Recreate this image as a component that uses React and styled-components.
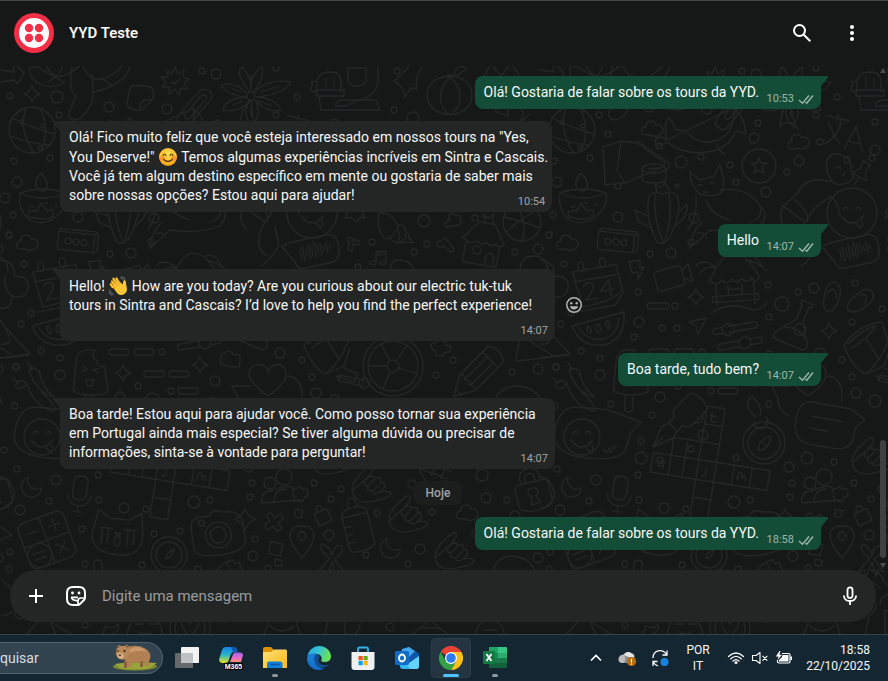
import React from 'react';
import styled, { createGlobalStyle } from 'styled-components';

const GlobalStyle = createGlobalStyle`
  *, *::before, *::after { box-sizing: border-box; }
  body { margin: 0; background: #161717; font-family: Roboto, "Noto Sans", sans-serif; color: #f7f8f8; }
  button { font: inherit; color: inherit; background: none; border: 0; padding: 0; cursor: pointer; }
  svg { display: block; flex: none; }
`;

const Screen = styled.div`
  display: flex;
  flex-direction: column;
  min-height: 100vh;
`;

/* ---------- header ---------- */

const Header = styled.header`
  display: flex;
  align-items: center;
  height: 66px;
  padding: 0 24px 2px 14px;
  background: #161717;
  border-top: 1px solid #444646;
`;

const Title = styled.h1`
  flex: 1;
  margin: 0 0 0 15px;
  font-size: 15px;
  line-height: 20px;
  font-weight: 600;
`;

const HeaderActions = styled.div`
  display: flex;
  gap: 26px;
`;

const IconButton = styled.button`
  display: grid;
  place-items: center;
  width: 24px;
  height: 24px;
`;

/* ---------- conversation ---------- */

const Chat = styled.main`
  position: relative;
  isolation: isolate;
  flex: 1;
  display: flex;
  flex-direction: column;
  background: #161717;
`;

const Wallpaper = styled.svg`
  position: absolute;
  inset: 0;
  z-index: -1;
  width: 100%;
  height: 100%;
`;

const Conversation = styled.section`
  flex: 1;
  display: flex;
`;

const Messages = styled.div`
  flex: 1;
  display: flex;
  flex-direction: column;
  gap: 12px;
  padding: 10px 0 20px;
`;

const Row = styled.div`
  display: flex;
  align-items: center;
  gap: 11px;
  justify-content: ${(p) => (p.$out ? 'flex-end' : 'flex-start')};
  padding: ${(p) => (p.$out ? '0 55px 0 0' : '0 0 0 60px')};
`;

const Bubble = styled.article`
  position: relative;
  max-width: 495px;
  padding: 7px 4px 7px 9px;
  border-radius: 8px;
  border-top-left-radius: ${(p) => (p.$out ? '8px' : '0')};
  border-top-right-radius: ${(p) => (p.$out ? '0' : '8px')};
  background: ${(p) => (p.$out ? '#144d37' : '#242626')};
  font-size: 14px;
  line-height: 19px;

  &::before {
    content: '';
    position: absolute;
    top: 0;
    ${(p) => (p.$out ? 'left: 100%' : 'right: 100%')};
    width: 7px;
    height: 10px;
    background: inherit;
    clip-path: ${(p) => (p.$out ? 'polygon(0 0, 100% 0, 100% 15%, 0 100%)' : 'polygon(0 0, 100% 0, 100% 100%, 0 15%)')};
  }
`;

const MetaSpace = styled.span`
  display: inline-block;
  width: ${(p) => (p.$out ? '58px' : '38px')};
  height: 1px;
`;

const Meta = styled.span`
  position: absolute;
  right: 7px;
  bottom: 3px;
  display: flex;
  align-items: center;
  gap: 4px;
  font-size: 11px;
  line-height: 14px;
  color: ${(p) => (p.$out ? '#9fb6ad' : '#a2a4a4')};
`;

const EmojiBox = styled.span`
  display: inline-block;
  vertical-align: -5px;
  height: 20px;
`;

const DayLabel = styled.div`
  align-self: center;
  padding: 5px 12px;
  border-radius: 7px;
  background: #1c1d1d;
  color: #a2a4a4;
  font-size: 12px;
  line-height: 14px;
  font-weight: 500;
`;

const Scrollbar = styled.div`
  display: flex;
  flex-direction: column;
  align-items: center;
  justify-content: space-between;
  width: 12px;
  padding: 2px 0 2px 2px;
`;

const Thumb = styled.div`
  width: 6px;
  height: 118px;
  margin: auto 0 5px;
  border-radius: 3px;
  background: #3f4141;
`;

const Composer = styled.form`
  display: flex;
  align-items: center;
  height: 52px;
  margin: 0 12px 12px 10px;
  padding: 0 14px;
  border-radius: 26px;
  background: #242626;
`;

const ComposerTools = styled.div`
  display: flex;
  gap: 16px;
`;

const MessageInput = styled.input`
  flex: 1;
  min-width: 0;
  margin: 0 12px 0 14px;
  padding: 0;
  border: 0;
  outline: 0;
  background: none;
  color: #f7f8f8;
  font: 15px/20px Roboto, "Noto Sans", sans-serif;
  &::placeholder { color: #9a9c9c; opacity: 1; }
`;

/* ---------- taskbar ---------- */

const Taskbar = styled.footer`
  display: flex;
  align-items: center;
  height: 47px;
  padding-right: 18px;
  background: #152633;
  border-top: 1px solid #36444e;
`;

const SearchBox = styled.button`
  display: flex;
  align-items: center;
  justify-content: space-between;
  width: 163px;
  height: 32px;
  padding-right: 4px;
  border: 1px solid #53616b;
  border-left: 0;
  border-radius: 0 16px 16px 0;
  background: #334451;
  color: #d8dde0;
  font-size: 14px;
`;

const Apps = styled.nav`
  display: flex;
  gap: 4px;
  margin-left: 4px;
`;

const AppButton = styled.button`
  position: relative;
  display: grid;
  place-items: center;
  width: 40px;
  height: 40px;
  border-radius: 4px;
  border: 1px solid ${(p) => (p.$active ? '#2c3c48' : 'transparent')};
  background: ${(p) => (p.$active ? '#243441' : 'transparent')};

  &::after {
    content: '';
    position: absolute;
    bottom: 0;
    display: ${(p) => (p.$open || p.$active ? 'block' : 'none')};
    width: ${(p) => (p.$active ? '16px' : '6px')};
    height: 3px;
    border-radius: 2px;
    background: ${(p) => (p.$active ? '#4cc2ff' : '#8f989e')};
  }
`;

const Tray = styled.div`
  display: flex;
  align-items: center;
  gap: 8px;
  margin-left: auto;
`;

const TrayLabel = styled.button`
  min-width: ${(p) => p.$width};
  text-align: ${(p) => p.$align};
  font-size: 12px;
  line-height: 16px;
  white-space: pre-line;
`;

const TrayGroup = styled.div`
  display: flex;
`;

/* ---------- wallpaper doodles ---------- */

const STAR4 = 'M0-8Q1.500-2 8 0Q2 1.500 0 8Q-1.500 2-8 0Q-2-1.500 0-8Z';
const CLOUD = 'M-7 6C-13 6-13-2-7-2C-8-9 2-10 3-4C10-6 13 5 6 6C4 8 0 8-2 6Z';
const SMILE = 'M-9-3Q-7-8-4-4M4-4Q7-8 9-3M-11 3Q0 17 11 3M3 9L8 15Q12 14 10 8';
const MOON = 'M-3-10C-15-4-9 12 2 10C8 9 11 5 10 1C2 5-5-2-3-10Z';
const HAND = 'M-18 6C-18-6-8-12-2-18C3-21 5-18 2-13L-3-7M-3-7Q2-11 5-7Q11-9 11-3Q16-2 14 3L10 7Q20 5 21 9Q19 13 8 15Q-14 22-18 6ZM-3-7Q-8-2-4 1Q1 0 5-7M-2 2Q-3 6 2 6Q7 4 11-3M3 7Q4 11 10 7';
const BALL = 'M-23 0a23 23 0 1 0 46 0a23 23 0 1 0-46 0M-20-12Q0-2 22 4M-22 6Q0 14 18 15M-6-22Q-14 0 2 23M8-21Q18-4 10 20M-12-8a2 2 0 1 0 4 0a2 2 0 1 0-4 0M9-4a2 2 0 1 0 4 0a2 2 0 1 0-4 0';

// [x, y, rotation, path]
const DOODLES = [
  [32, 94, 0, STAR4], [123, 373, 0, STAR4], [200, 365, 0, STAR4], [156, 297, 0, STAR4], [289, 331, 0, STAR4], [245, 519, 0, 'M0-10Q2-3 11 0Q3 3 0 11Q-3 3-10 0Q-3-3 0-10Z'],
  [113, 129, 0, CLOUD], [259, 142, -10, CLOUD], [28, 243, 0, CLOUD], [468, 513, 0, CLOUD], [452, 220, -12, 'M-7 6C-10 2-6-1-2 0C-4-7 2-9 4-4C10-4 10 5 6 6Z'],
  [31, 487, 0, MOON], [390, 548, 0, MOON],
  [370, 485, 0, HAND], [407, 515, 0, HAND], [453, 552, 0, HAND], [330, 457, 0, HAND],
  [32, 130, 0, BALL],
  [175, 81, 0, 'M0-14L3-7L9-11L8-4L14-2L9 2L13 8L6 7L4 14L0 8L-6 13L-6 6L-13 6L-9 1L-14-4L-7-4L-8-10L-3-7ZM-4 1L-1 3L5-2'],
  [251, 96, 0, 'M-4 0a4 4 0 1 0 8 0a4 4 0 1 0-8 0M-2-5C-16-24-12-26-9-29C-2-22 0-16 0-5C-1-20 5-25 11-29C13-20 8-12 3-4C14-15 28-16 40-14C36-5 20 0 5 1C18 1 28 8 30 14C18 17 10 10 4 4C9 14 9 22 1 29C-7 22-6 12-2 5C-8 13-16 16-28 14C-25 4-16 1-4 1C-18 0-26-4-30-11C-20-14-12-12-4-2M0-10V-20M10-4L28-10M-10-4L-20-8M8 5L20 10M0 10V20M-8 5L-18 9'],
  [140, 98, 0, 'M-6-12Q-9-14-11-6L-13 6Q-12 12-4 12Q0 14 6 8L12 2Q15-4 12-10Q9-13-6-12ZM0 10Q0 2 6 2H12'],
  [195, 106, 40, 'M-6-16Q2-26 8-16V20Q8 30-4 26Q-8 20-6-16ZM-2-12Q2-18 4-12V12Q2 18-2 14Z'],
  [86, 92, 0, 'M-14-26Q-18 0-10 4L-16 18Q-20 26-12 28Q-2 28 6 10Q8 0 6-18M-14-20Q10-44 50-26M8 0Q40-8 44-26M16-14L26-6'],
  [42, 76, 0, 'M-12-8Q-6-12 0-6L22 6Q12 14-2 8Q-14 2-12-8ZM6 6Q20-2 20-10'],
  [8, 74, 0, 'M-8-4L6-2Q4-10 8-9L16-1L10 10L6 6L-8 8'],
  [330, 92, 0, 'M-13 0V-10Q-12-20 0-20Q11-20 11-10V0M-14-10Q-21-12-17-7Q-22-2-15 0M-14-2H14V4H-14ZM-11 4L-9 18H50L46 8H34L12 8Q4 10 6 14H16L30 8Q50 2 48-16V-26M18-24V-12Q20-5 28-6Q38-6 36-18V-24ZM-4-14V-6M4-14V-6'],
  [410, 80, 10, 'M-3-14Q-12 0-16 4Q-4 8-2 18Q2 4 8 8Q4-6 10-16'],
  [450, 95, 0, 'M-23 0C-24-24 22-26 22 0C22 26-22 26-23 0ZM0-18C-14-6-10 14-2 18M0-18C14-8 12 12 2 18M-5-18Q0-22 4-18M4-20Q6-30 14-28Q18-26 12-23Q8-20 4-18'],
  [505, 78, 0, 'M-22 0L-14-14L-4-2L6-14L14-4M-18 6L10 2Q18 6 10 10'],
  [500, 100, 0, 'M-16 8L-8-8L-4 12L8 16V-2L24 12L20 22L30 14'],
  [92, 72, 0, 'M-46-6Q-40 6-30 4Q-18 0-10-8Q-2 12 14 6Q26 0 30-6'],
  [133, 128, 0, 'M-6 12Q-10-6-4-10Q2-4 2 2Q12 0 20 10Q38 20 54 6Q64-8 60-20M60-20Q74-8 72 6Q66 2 62 4Q58 16 44 22Q14 30-6 14Q-18 22-18 12Q-12 6-6 12ZM44 16Q46 24 52 26'],
  [246, 112, 0, 'M-6 16Q-6-4 6-12Q4 4 12 18M-6 14Q4 6 8 16'],
  [300, 133, 14, 'M-16-14H6M-6-18V-12M-12 14Q0 2-2-12M-14-8Q-6 4 2 10M8 14L14-10L26 12M11 6H21'],
  [93, 163, 0, 'M-30-16L-12-22L4-20L32 0L30 4L-8 20L-28 22ZM-12-22L-16 8L-8 20M4-22L36 0Q38 6 30 8'],
  [114, 174, 0, 'M-12-4Q-12-10 0-10Q12-10 12-4V4Q12 9 0 9Q-12 9-12 4ZM-12-4Q0 3 12-4M-6-5L6-6'],
  [219, 166, 0, 'M-17 0a17 17 0 1 0 34 0a17 17 0 1 0-34 0M0-8L2-3H8L3 1L5 7L0 4L-5 7L-3 1L-8-3H-2Z'],
  [170, 190, 0, 'M-20-18L-10-10Q-2-12 4-14L10-26L14-8L12 2Q6 8-10 4Q-20-4-20-18ZM-12-4Q-10-7-8-4M0-6Q2-9 4-6M-6 2L-2 2M10 0Q38-4 50 16Q54 28 40 32M-14 6Q-12 26-22 40M-4 10Q0 24 20 30M50 16Q60 24 50 36Q30 44 0 40L-20 58Q-20 44-8 32M-14 44Q-6 40-4 48'],
  [275, 196, 0, 'M12-36Q18-46 28-40Q38-36 36-26Q42-18 34-14Q22-8 16-16Q10-24 12-36ZM20-28Q24-30 26-27M30-24L28-20M16-14Q-8-22-18-2L-32 10Q-38 24-28 34M-32 10L-10 26L0 12L16 0Q24 8 24 18M-10 26Q-24 50-8 60M-20 4Q-4 18-8 26M0 30L4 50Q-8 68-14 70'],
  [312, 213, 0, 'M-25 0a25 25 0 1 0 50 0a25 25 0 1 0-50 0'], [312, 213, 0, SMILE],
  [320, 175, 30, 'M-4-14H4L3-6L8 2H-8L-3-6ZM0 2V12'],
  [43, 207, 0, 'M-23-14Q0-22 23-14Q26 0 10 12Q0 18-12 14Q-26 4-23-14ZM-23-14Q0-4 23-14M-6-18Q-10-26-2-34Q6-26 4-18Q0-14-6-18ZM-14 10Q-18 2-6 4L-2-4L4 4Q12 0 10 10Q2 14-14 10M-12 0H-9M2-4H4M12-2H14'],
  [123, 212, 0, 'M-14-16Q-10-22 0-18Q10-22 14-16Q20 0 6 26Q0 34-6 30Q-18 6-14-16ZM-8-18Q-10 6 0 30M6-18Q10 4 2 28M-6-20L-8-28L-2-24L2-30L6-22M-16 4L-28-2L-24 10L-12 16M16 0L24-8Q26 4 12 14'],
  [77, 241, 6, 'M-19-8L-17-11H18L21-7V8L18 10H-18Q-20 6-19-8ZM-19-8H17V10M17-8L21-8M-12 1a3 3 0 1 0 6 0a3 3 0 1 0-6 0M-4 1a3 3 0 1 0 6 0a3 3 0 1 0-6 0M4 1a3 3 0 1 0 6 0a3 3 0 1 0-6 0'],
  [57, 284, -10, 'M-22-16H22L24 10Q14 20-18 20ZM-22-6H22M-24 24L14 24L25 12M-16-20a3 5 0 1 0 6 0a3 5 0 1 0-6 0M6-20a3 5 0 1 0 6 0a3 5 0 1 0-6 0M-14 0Q-8-6-4 0Q-4 6-14 14H-2M12 14V-2L2 8H16'],
  [97, 269, 0, 'M-8-7L3-9V-1L7-2L1 11V3L-5 4Z'],
  [131, 277, -16, 'M-13-9H9Q12-9 12-6V8Q12 11 9 11H-13Q-16 11-16 8V-6Q-16-9-13-9ZM12-3L20-8V10L12 5'],
  [196, 287, -4, 'M-26-8Q-10-36 0-34Q14-32 24-8Q20-2 16-8Q12-2 6-8Q2-2-4-8Q-8-2-14-8Q-18-2-26-8ZM-20-4V18M18-4V18M-24 8H22V14H-24ZM-8-2V8M6-2V8M-8 2H6M-38-24Q-30-32-18-20M-36-16Q-28-24-18-20M28-18Q20-34 12-30M32-14Q22-24 12-26M-26 24Q-8 14 10 22Q20 28 30 18'],
  [292, 298, 14, 'M-8-4Q-8-16 0-16Q8-14 7 0Q6 14-2 14Q-8 12-8-4ZM-6-4Q0-14 4-2'], [320, 302, 52, 'M-8-4Q-8-16 0-16Q8-14 7 0Q6 14-2 14Q-8 12-8-4ZM-6-4Q0-14 4-2'],
  [58, 328, 0, 'M-26-2L26-16Q28 8 10 16Q-16 22-26-2ZM-20-1Q-10 14 6 11Q20 6 21-10M-10-2Q-4 4-8 6Q-13 2-10-2M0-4Q5 2 0 5Q-4 0 0-4M10-7Q14-2 10 1Q6-4 10-7'],
  [157, 326, 0, 'M-8-4L9-8L1 8L-1 0Z'],
  [197, 333, -10, 'M-22-8H-14M-8-8H20Q23-4 20-2H-8M-14-2H-22Q-25-5-22-8M-14-5a6 6 0 1 0 12 0a6 6 0 1 0-12 0M-20 8H0M12 8H22Q25 12 22 14H12M0 14H-20Q-23 11-20 8M0 11a6 6 0 1 0 12 0a6 6 0 1 0-12 0'],
  [257, 326, 22, 'M-5-26H7V-22H4V-6L17 14Q18 20 12 20H-14Q-20 20-18 14L-3-6V-22H-5ZM-12 6Q0 0 12 8M-2 2a6 6 0 1 0 12 0a6 6 0 1 0-12 0'],
  [313, 250, -12, 'M-20-12H16Q26-12 26 0Q26 16 14 16H-12Q-20 16-20 8L-30-10ZM-13-3V7M-10-5V9M-7-2V5M-4-6V8M-1-3V6M2-8V8M5-5V5M8-6V6M11-2V3M14-5V6M17-1V2'],
  [355, 212, 0, 'M-10 0Q-6-2-6-6Q0-2 4-8Q6-4 10-4Q6 2 10 6Q4 4 2 10Q-4 4-10 6Q-6 2-10 0'],
  [394, 230, 10, 'M-18-14Q-6-18 4-4Q-2 12-8 10Q-18 2-18-14ZM4-6Q10-8 12 0Q16 0 16 5L22 9L4 12Q-2 10-4 8M4 0Q8 4 6 10M12 2Q14 6 10 10'],
  [353, 243, 20, 'M-6-4H4Q8-2 4 1H0L2 8H-3L-4 0Q-8 0-6-4ZM-3-2H2'], [447, 245, -30, 'M-8-7H2L4 8H-1L-3-1Q-10 0-8-7Z'],
  [379, 258, 0, 'M-3 4V-6L7-7V4M-3-3L7-4M-3 4a3 2 0 1 0-6 2Q-3 8-3 4M7 4a3 2 0 1 0-6 2Q7 7 7 4'],
  [484, 243, 10, 'M-22-2L-8-20H8L20-2Q16 4 12-1Q8 4 3-1Q-2 4-7-1Q-12 5-22-2ZM-18 2V22H16V2M4 22V12Q8 6 12 12V22M-10 8a4 4 0 1 0 8 0a4 4 0 1 0-8 0M-2-20L-6-28L0-25L4-30L6-20'],
  [522, 222, 0, 'M-19 0a19 19 0 1 0 38 0a19 19 0 1 0-38 0M-18-5Q2 0 18 6M-6-18Q6 2 0 19M14-12Q0-4-16 10'],
  [400, 266, 0, 'M-9 4Q-10-6 0-6Q10-6 14 4'], [534, 264, 0, 'M-14 8Q-14-8 0-8Q14-8 14 8'],
  [8, 280, 0, 'M-8-20Q8-18 6-4Q22-4 20 8Q18 20 4 16Q4 30-8 28M-2-4Q-6 6 4 16'],
  [12, 340, 0, 'M-12-20L-8-14L18 14L-12 18M-6-10Q4 6-12 4'],
  [330, 352, 0, 'M-26-6Q-12-28 12-30L18-10Q10 10-4 22Q-16 18-26-6ZM-22-8Q-6-24 6-26M-18-4L-4-14L6-26M-4-14L8 6M-4 22L14 14L20-4M6 24L24 30L28 22L14 16'],
  [393, 366, 0, 'M-30 0a30 30 0 1 0 60 0a30 30 0 1 0-60 0M-25 0a25 25 0 1 0 50 0a25 25 0 1 0-50 0M-6 0a6 6 0 1 0 12 0a6 6 0 1 0-12 0M-6 0H-25M3-5L14-21M6 2L24 8M-3 6L-10 23M-3-5L-12-22'],
  [363, 383, 12, 'M-24-3H0V3H-24ZM-24-3Q-28 0-24 3M-4 0a5 5 0 1 0 10 0a5 5 0 1 0-10 0'],
  [440, 348, 0, 'M-9-4Q-2-6-1-8Q6-8 6-3Q14-2 9 4Q4 4 2 8Q-6 8-4 3Q-10 2-9-4Z'],
  [476, 374, 45, 'M-11-28Q0-36 11-28V12L0 32L-11 12ZM-11-20H11M-4-20V12M4-20V12M-11 12Q-7 8-4 12Q0 8 4 12Q8 8 11 12M-4 25H4'],
  [530, 355, 0, 'M-10-20L-14 6L38 0M-10-20L22 0'], [518, 400, 0, 'M-24 4Q-20-14 0-14Q20-12 24 4'],
  [90, 372, 2, 'M-16 18L-14-14Q-10-24 4-22Q0-14 6-12Q6-6 14-6L19 18Q18 22 0 23Q-16 22-16 18ZM-4 24V38Q0 42 4 38V24M-8-6L-3-3L-8 0M8-4L3-2L8 1M-5 8H5M-3 8V13Q0 15 3 13V8'],
  [119, 352, 0, 'M-7-3H7a3 3 0 0 1 0 6H-7a3 3 0 0 1 0-6ZM18-3H32a3 3 0 0 1 0 6H18a3 3 0 0 1 0-6ZM40 0a3 3 0 1 0 6 0a3 3 0 1 0-6 0'],
  [154, 374, 0, 'M-7-3H7a3 3 0 0 1 0 6H-7a3 3 0 0 1 0-6ZM18-3H32a3 3 0 0 1 0 6H18a3 3 0 0 1 0-6Z'],
  [188, 391, 0, 'M-7-3H7a3 3 0 0 1 0 6H-7a3 3 0 0 1 0-6ZM-20 0a3 3 0 1 0 6 0a3 3 0 1 0-6 0'],
  [118, 306, 0, 'M-8-3H8a3 3 0 0 1 0 6H-8a3 3 0 0 1 0-6ZM14 0a3 3 0 1 0 6 0a3 3 0 1 0-6 0'],
  [230, 359, 8, 'M-9-4Q-4-4-4-8Q2-8 2-5H8Q11-4 10 6Q4 9-9 6Z'],
  [268, 380, 0, 'M0 16Q-20 2-19-7Q-16-18-5-15Q0-12 0-8Q4-16 10-16Q18-14 18-6Q18 4 0 16M20-4Q36-2 34 22M-18 6L-36 6L-30 18Q-30 32-18 36'],
  [33, 382, 0, 'M-4-12Q0-16 6-11Q10 6 18 12Q24 16 18 14Q2 8-4-12ZM-2-12Q-2-18-6-20M-18 4Q-12-6-6 2Q0 20 12 26Q22 32 22 26Q18 18 8 10M-18 4Q-14 10-6 2M-16 0L-20-4'],
  [60, 439, 4, 'M-26-30H4L40-20L30-8L26 10Q20 20-8 20Q-44 20-46 0Q-44-30-26-30ZM4 10L7 13L13 6M9 11L11 13L17 6'], [42, 437, 0, 'M-18 0a18 18 0 1 0 36 0a18 18 0 1 0-36 0'], [42, 437, 0, SMILE],
  [140, 420, 45, 'M-12-24Q-12-30 0-30Q12-30 12-24V-6Q12 0 6 2V10H-6V2Q-12 0-12-6ZM-6 10L-8 18L0 38L8 18L6 10M0 36V24M12-20Q20-14 12-8'],
  [175, 460, 9, 'M-16-52H2V22H-16M-16-52V60M2-52V60H-16M-16-34H2M-16-16H2M-62 2H56M-62 22H56M-62 2V22M-44 2V-16H-16M-44-16V22M-30-16V22M20 2V22M38 2V22M56 2V22M-16 40H2M-10-46V-38Q-8-36-6-38M-12-43H-6M-56 12Q-52 6-50 12Q-54 18-56 12M-50 8V16M25 16V9Q29 6 29 14Q33 6 33 16M-7 9V16Q-9 19-11 17'],
  [224, 443, 0, 'M-21 0a21 21 0 1 0 42 0a21 21 0 1 0-42 0M-16 0a16 16 0 1 0 32 0a16 16 0 1 0-32 0M6-7Q8 4-5 8Q-8-2 6-7ZM-1-1L3 3M-10-22a7 7 0 1 0 12-4M-8-26Q-18-32-16-42Q-12-50-6-40Q-2-34-4-28'],
  [287, 427, 10, 'M-20-22H20L36-14L28-4V6Q26 20 10 20H-16Q-32 18-32-2Q-32-20-20-22ZM-16-8H14M-16 4H2'],
  [80, 490, 8, 'M-7-8Q-7-14 0-14Q7-14 7-8V4Q7 10 0 10Q-7 10-7 4ZM-12 6Q-10 16 0 16Q10 16 12 4M0 16V22M-4 22H4'],
  [280, 487, 0, 'M-16-4a6 6 0 1 0 12 0a6 6 0 1 0-12 0M-4-10a8 8 0 1 0 16 0a8 8 0 1 0-16 0M-18 16Q-20 4-8 4Q8-4 14 2M-6 16Q-6 2 6 2M-18 16L20 13M16 2Q20-2 22 2Q28 0 28 6Q28 10 24 10Q24 16 18 14Q12 12 14 8Q10 2 16 2'],
  [47, 540, -20, 'M-24-16Q-24-24-16-24H16Q24-24 24-16V16Q24 24 16 24H-16Q-24 24-24 16ZM0-24V24M-24 0H24M-16-12H-6M6-12H18M12-18V-6M7 7L17 17M17 7L7 17M-24 12a12 12 0 1 0 24 0a12 12 0 1 0-24 0M-18 9H-6M-18 15H-6'],
  [118, 533, 6, 'M-24-6L-22-22L-10-14H10L22-22L24-6Q30 22 0 22Q-32 20-24-6ZM-18-4H-6M6-4H18M-16-4V12M-10-4V10M10-4V12M16-4V10M-3 8a3 5 0 1 0 6 0a3 5 0 1 0-6 0M-3 0H3L0 3Z'],
  [218, 533, -8, 'M-26-8Q-26-18-16-18H-6Q-2-26 8-20Q24-20 26-8V12Q24 22 0 22Q-26 22-26 12ZM-13 2a13 13 0 1 0 26 0a13 13 0 1 0-26 0M-8 2a8 8 0 1 0 16 0a8 8 0 1 0-16 0M-18-12a3 3 0 1 0 6 0a3 3 0 1 0-6 0'],
  [169, 555, 0, 'M-18 0a18 18 0 1 0 36 0a18 18 0 1 0-36 0M-13 0a13 13 0 1 0 26 0a13 13 0 1 0-26 0M5-6Q3 4-3 3Q-3-2 5-6'],
  [274, 522, 10, 'M-9-6L-5-9L0-4L5-9L9-5L4 0L9 5L5 9L0 4L-5 9L-9 5L-4 0Z'],
  [302, 540, 0, 'M0 18Q-12 4-12-4Q-12-14 0-14Q12-14 12-4Q12 4 0 18M-4-4a4 4 0 1 0 8 0a4 4 0 1 0-8 0'],
  [276, 552, 12, 'M-7-9H5V3H-7ZM1 7H8V13H1Z'], [298, 513, 10, 'M-3-3H4V4H-3Z'], [322, 515, -25, 'M-7-4H7V9H-7ZM-3-4Q-4-10 0-10Q4-10 3-4'],
  [357, 525, -14, 'M-13-10Q-13-18 0-18Q13-18 13-10V22Q10 27-8 26Q-13 26-13 20ZM-13-10H13M-5-18Q-4-28 0-28Q4-28 5-18M-13 0H-6M-13 8H-7M-13 16H-6'],
  [332, 560, 0, 'M-2-2Q-14-10-10-16Q-2-14 0-4Q2-16 10-14Q12-6 2-1L12 12L6 10L4 16L0 2L-6 16L-8 10L-14 12Z'],
  [533, 492, -14, 'M-14-10Q-17-9-17-4V12Q-16 18 0 19Q16 18 17 12V-4Q17-9 14-10ZM-10-10V-16Q-8-24 0-24Q8-24 10-16V-10M-5-10V-15Q-4-19 0-19Q4-19 5-15V-10M0-4a4 4 0 0 1 2 8L5 12H-5L-2 4a4 4 0 0 1 2-8'],
  [435, 470, 20, 'M-10-12H18M-12-4H16M-14 4H14M-8-12L-14 6M2-12L-2 6M10-12L8 6M-14 6Q0 22 14 6'],
  [6, 490, 0, 'M-10-14Q4-14 8 2Q10 14-8 20'], [6, 535, 0, 'M-8-10L6 0L-8 6'],
  [98, 568, 0, 'M-4-6Q0-10 4-6V12Q0 18-4 12Z'], [233, 566, 0, 'M-16 6Q-12-4 0-6L2-2L6-4L8 2L14 10M-6-2L-2 4'],
  [513, 570, 0, 'M-20 0Q-16-14 0-14Q18-12 22 2'], [190, 628, 0, 'M-20 0a20 20 0 1 0 40 0a20 20 0 1 0-40 0M-15 0a15 15 0 1 0 30 0a15 15 0 1 0-30 0M0 8Q-12-2-7-7Q-2-9 0-4Q4-9 8-6Q11-2 0 8'],
  [145, 628, 0, 'M-18 8Q-16-12 0-14Q16-10 18 8M-10-4H-2M4-4H12M-6 4Q0 8 6 4'], [60, 625, 0, 'M-34 10L-18-8L-10-4L-4 10M-14-6L16 12'], [110, 628, 0, 'M-8 8L-4-2Q4 2 8-4Q10 4 2 6'], [280, 632, 0, 'M-16 2L-10-14Q6-6 14-16L20 2M-10-6Q2 4 14-6'], [345, 620, 0, 'M-20 14L-16-4Q-10-8-8-16M0 14V-10L14-4Q18 6 10 14'], [430, 628, 0, 'M-20 8L0-8L20 8M-10 0H10'], [490, 630, 0, 'M-14 4a14 14 0 1 1 28 0M-6 0H6'],
  [336, 590, 0, 'M-6-20Q6-18 8-8Q16-4 12 4Q4 8 4 14M-6-10L4-2'], [10, 596, 0, 'M-8-16Q4-8 8 8Q4 18-8 20'],
];

// [x, y, radius]
const DOTS = [
  [57, 97, 6], [10, 96, 3], [59, 115, 3], [109, 107, 5], [167, 109, 5], [202, 71, 3], [216, 74, 5], [276, 68, 3], [297, 97, 3], [276, 115, 3], [14, 161, 3], [50, 158, 3], [40, 148, 2], [17, 182, 5], [5, 198, 5],
  [68, 134, 3], [119, 146, 3], [141, 162, 6], [161, 157, 3], [190, 165, 3], [78, 186, 3], [78, 217, 5], [137, 186, 2], [196, 182, 3], [226, 192, 5], [247, 172, 3], [259, 161, 5], [280, 142, 3], [335, 122, 3], [307, 160, 3], [332, 158, 3], [214, 138, 5], [218, 123, 3], [335, 150, 5], [394, 110, 3], [413, 118, 6], [397, 71, 3],
  [13, 215, 3], [9, 235, 3], [24, 264, 3], [154, 218, 5], [151, 242, 3], [110, 254, 3], [131, 253, 5], [98, 292, 3], [99, 322, 5], [94, 337, 3], [31, 313, 3], [21, 324, 3], [122, 328, 3], [137, 328, 3], [228, 285, 3], [258, 292, 3], [274, 288, 5], [242, 304, 7], [229, 317, 3], [315, 283, 3], [342, 309, 3], [312, 322, 3], [280, 353, 5], [41, 351, 3], [60, 358, 3], [60, 375, 5], [16, 367, 3], [138, 386, 3], [215, 381, 5], [120, 397, 5],
  [424, 221, 6], [475, 218, 3], [372, 242, 3], [427, 244, 3], [414, 252, 3], [515, 252, 3], [538, 249, 5], [549, 235, 3], [358, 267, 3], [408, 200, 3], [302, 360, 3], [312, 377, 3], [316, 393, 5], [453, 360, 3], [436, 375, 3], [512, 372, 3], [538, 369, 5], [556, 367, 3],
  [335, 401, 6], [71, 404, 3], [112, 415, 3], [163, 435, 5], [101, 441, 3], [151, 449, 3], [101, 458, 6], [120, 460, 3], [196, 458, 3], [15, 406, 3], [4, 450, 3], [229, 404, 3], [267, 458, 6], [294, 462, 3], [249, 467, 5], [252, 483, 3], [314, 483, 3], [331, 499, 3], [250, 497, 3], [17, 469, 3], [56, 480, 5], [98, 475, 3], [99, 500, 3], [49, 501, 3], [20, 510, 5], [124, 508, 5], [146, 509, 3], [194, 502, 6], [210, 500, 3], [82, 529, 3], [154, 534, 3], [180, 531, 3], [255, 539, 3], [253, 556, 5], [9, 569, 3], [10, 552, 3], [85, 564, 3], [142, 565, 3], [198, 569, 3], [268, 568, 3], [329, 535, 5],
  [341, 489, 3], [482, 475, 6], [486, 498, 5], [507, 500, 3], [377, 513, 3], [432, 512, 3], [420, 549, 5], [366, 555, 3], [408, 564, 3], [538, 558, 5], [515, 516, 5], [412, 484, 4], [476, 533, 4], [85, 625, 3], [225, 618, 4], [390, 627, 4], [20, 614, 5],
];

function ChatWallpaper() {
  return (
    <Wallpaper aria-hidden="true">
      <defs>
        <pattern id="doodles" width="540" height="568" patternUnits="userSpaceOnUse">
          <g transform="translate(0 -66)" fill="none" stroke="#242626" strokeWidth="1.300" strokeLinecap="round" strokeLinejoin="round">
            {[0, -540].map((shift) => (
              <g key={shift} transform={`translate(${shift} 0)`}>
                {DOODLES.map(([x, y, r, d], i) => <path key={i} d={d} transform={`translate(${x} ${y}) rotate(${r})`} />)}
                {DOTS.map(([x, y, r], i) => <circle key={i} cx={x} cy={y} r={r} />)}
              </g>
            ))}
          </g>
        </pattern>
      </defs>
      <rect width="100%" height="100%" fill="url(#doodles)" />
    </Wallpaper>
  );
}

/* ---------- small drawings ---------- */

const Avatar = () => (
  <svg width="40" height="40" viewBox="0 0 40 40" role="img" aria-label="YYD Teste">
    <circle cx="20" cy="20" r="20" fill="#f22f46" />
    <circle cx="20" cy="20" r="15" fill="#fff" />
    {[15, 25].map((x) => [15, 25].map((y) => <circle key={`${x}${y}`} cx={x} cy={y} r="4.200" fill="#f22f46" />))}
  </svg>
);

const Ticks = () => (
  <svg width="16" height="11" viewBox="0 0 16 11" fill="none" stroke="currentColor" strokeWidth="1.400" role="img" aria-label="Entregue">
    <path d="M1 6L4.500 9.300L11 1.500M7.500 8L8.800 9.300L15 1.500" />
  </svg>
);

const Blush = () => (
  <EmojiBox role="img" aria-label="😊">
    <svg width="20" height="20" viewBox="0 0 20 20">
      <defs><radialGradient id="face" cx=".5" cy=".35" r=".7"><stop offset="0" stopColor="#ffe04d" /><stop offset=".7" stopColor="#fcb827" /><stop offset="1" stopColor="#ee8a16" /></radialGradient></defs>
      <circle cx="10" cy="10" r="9" fill="url(#face)" />
      <circle cx="4.500" cy="11.500" r="2.500" fill="#f4772e" opacity=".6" /><circle cx="15.500" cy="11.500" r="2.500" fill="#f4772e" opacity=".6" />
      <path d="M5 8.500Q6.500 5.500 8 8.500M12 8.500Q13.500 5.500 15 8.500M5.800 12.500Q10 16.500 14.200 12.500" fill="none" stroke="#5a3510" strokeWidth="1.200" strokeLinecap="round" />
    </svg>
  </EmojiBox>
);

const Wave = () => (
  <EmojiBox role="img" aria-label="👋">
    <svg width="20" height="20" viewBox="0 0 20 20" fill="none" strokeLinecap="round">
      <path d="M6.500 9L4 5.500M8.500 7.500L5.500 2.800M10.500 6.500L8.500 2.500M4.500 11L2.800 8.300" stroke="#fbc02d" strokeWidth="2.300" />
      <path d="M4 10L11 5Q14 8 15 8.500Q14.500 5 16.500 4Q18.300 4.500 18 8L19 12.500Q19 17 15.500 18.500Q11.500 20 9 17Z" fill="#fbc536" />
      <path d="M7 12L5 9.300M9.500 10L7.500 7.300M12 8.500L10.500 6.500" stroke="#e08f1d" strokeWidth=".8" />
      <path d="M12.500 1.500Q14.500 2 15 4M14 .6Q16.500 1 17 3.500M1.500 14Q2 17 5 18M1 16.500Q2 19 4 19.300" stroke="#777b80" strokeWidth=".9" />
    </svg>
  </EmojiBox>
);

const ReactIcon = () => (
  <svg width="16" height="16" viewBox="0 0 16 16" fill="#b2b4b4">
    <path fillRule="evenodd" d="M8 0a8 8 0 1 1 0 16A8 8 0 0 1 8 0ZM8 1.500a6.500 6.500 0 1 0 0 13a6.500 6.500 0 0 0 0-13Z" />
    <circle cx="5.300" cy="6.200" r="1.200" /><circle cx="10.700" cy="6.200" r="1.200" />
    <path d="M3.800 9.300H12.200Q11 12.600 8 12.600Q5 12.600 3.800 9.300Z" />
  </svg>
);

const SearchIcon = () => (
  <svg width="20" height="20" viewBox="0 0 20 20" fill="none" stroke="#fff" strokeWidth="2">
    <circle cx="7.500" cy="7.500" r="5.500" /><path d="M11.500 11.500L18.300 18.300" />
  </svg>
);

const MenuIcon = () => (
  <svg width="20" height="20" viewBox="0 0 20 20" fill="#fff">
    <circle cx="10" cy="4" r="2" /><circle cx="10" cy="10" r="2" /><circle cx="10" cy="16" r="2" />
  </svg>
);

const PlusIcon = () => (
  <svg width="16" height="16" viewBox="0 0 16 16" stroke="#fff" strokeWidth="2"><path d="M8 1V15M1 8H15" /></svg>
);

const StickerIcon = () => (
  <svg width="22" height="22" viewBox="0 0 22 22" fill="none" stroke="#fff" strokeWidth="2" strokeLinejoin="round">
    <path d="M8 2H14Q20 2 20 8V12.500Q20 14 19 15L15 19Q14 20 12.500 20H8Q2 20 2 14V8Q2 2 8 2Z" />
    <path d="M19.500 13H16Q13 13 13 16V19.500M6.300 12.500Q7.500 15.800 12.500 15.500M6 12.300H13" strokeWidth="1.700" />
    <circle cx="7.500" cy="8" r="1.400" fill="#fff" stroke="none" /><circle cx="14" cy="8" r="1.400" fill="#fff" stroke="none" />
  </svg>
);

const MicIcon = () => (
  <svg width="20" height="20" viewBox="0 0 20 20" fill="none" stroke="#fff" strokeWidth="1.800">
    <rect x="7.500" y="1.400" width="5" height="10.500" rx="2.500" /><path d="M3.800 9.500Q4.300 15 10 15Q15.700 15 16.200 9.500M10 15V19" />
  </svg>
);

const Arrow = ({ down }) => (
  <svg width="8" height="5" viewBox="0 0 8 5" fill="#4a4c4c"><path d={down ? 'M1 0H7L4 5Z' : 'M1 5H7L4 0Z'} /></svg>
);

const Capybara = () => (
  <svg width="46" height="28" viewBox="0 0 46 28" aria-hidden="true">
    <ellipse cx="23" cy="22.500" rx="22" ry="4" fill="#7d8c2c" />
    <path d="M3 20Q20 17 45 19L38 24Q22 27 8 24Z" fill="#99a43a" />
    <path d="M13 4Q25-1 34 5Q41 10 37 17V22H33V18Q26 20 20 18V23H16L13 17Z" fill="#b07f52" />
    <path d="M18 5Q28 0 35 8Q28 5 18 9Z" fill="#c99a69" />
    <path d="M31 17V23H28V18M15 18V24H12V17" fill="#8c603c" />
    <path d="M5 3Q6 0 9 2H13Q16-1 17 3Q19 8 16 13Q13 17 8 15Q4 13 4 9Z" fill="#b98858" />
    <path d="M5 10Q8 7 12 11Q12 15 8 15Q5 14 5 10Z" fill="#d9b084" />
    <circle cx="12.500" cy="7" r="1" fill="#22170f" /><circle cx="6" cy="7" r=".8" fill="#22170f" /><path d="M6 10.500L9.500 10.800L8 12.500Z" fill="#3b281c" />
    <path d="M5 2.500L7 3.500M14 3L16.500 2" stroke="#5d3d27" strokeWidth="1.300" />
  </svg>
);

const TaskViewIcon = () => (
  <svg width="24" height="24" viewBox="0 0 24 24">
    <rect y="7" width="18" height="15" rx="1" fill="#666a6d" /><rect x="6" y="1" width="18" height="16" rx="1" fill="#f3f3f3" /><path d="M6 7H18V17H6Z" fill="#bfc1c2" />
  </svg>
);

const M365Icon = () => (
  <svg width="24" height="24" viewBox="0 0 24 24">
    <defs>
      <linearGradient id="mA" x1="0" y1="0" x2="0" y2="1"><stop stopColor="#1781e8" /><stop offset=".5" stopColor="#27b5c8" /><stop offset="1" stopColor="#eee21c" /></linearGradient>
      <linearGradient id="mB" x1="0" y1="0" x2="0" y2="1"><stop stopColor="#9b63ee" /><stop offset=".6" stopColor="#ee6abf" /><stop offset="1" stopColor="#fb8f72" /></linearGradient>
    </defs>
    <path d="M6 1H15Q17 1 18 4L18.500 6H15Q12.500 6 11.500 9L9.500 15Q8.500 17 5 17H3Q-1 16 .5 12L3 4Q4 1 6 1Z" fill="url(#mA)" />
    <path d="M12 1H15Q17 1 18 4L18.500 6H14Z" fill="#1458b8" />
    <path d="M16 6.500H21Q25 7 23.500 11L22 16H11L14 8.500Q14.500 6.500 16 6.500Z" fill="url(#mB)" />
    <rect x="5" y="17" width="19" height="7" fill="#000" />
    <text x="14.500" y="23" textAnchor="middle" fontFamily="Liberation Sans, sans-serif" fontSize="7" fontWeight="700" fill="#fff">M365</text>
  </svg>
);

const FolderIcon = () => (
  <svg width="24" height="24" viewBox="0 0 24 24">
    <defs><linearGradient id="fold" x1="0" y1="0" x2="1" y2="1"><stop stopColor="#ffe07a" /><stop offset="1" stopColor="#fdb913" /></linearGradient></defs>
    <path d="M0 3Q0 1 2 1H8L11 4H22V8H0Z" fill="#dc9404" />
    <path d="M0 6H8L11 3.500H23Q24 4 24 5V22H0Z" fill="url(#fold)" />
    <path d="M4 22V17.500Q4 15.500 6 15.500H17Q19.500 15.500 19.500 17.500V22Z" fill="#1180d8" /><path d="M7 18.500H16.500" stroke="#0b559c" strokeWidth="1.500" />
  </svg>
);

const EdgeIcon = () => (
  <svg width="24" height="24" viewBox="0 0 24 24">
    <defs>
      <linearGradient id="eA" x1="0" y1="0" x2="1" y2=".3"><stop stopColor="#2a9fe0" /><stop offset=".5" stopColor="#33c3d8" /><stop offset="1" stopColor="#6ae05a" /></linearGradient>
      <linearGradient id="eB" x1="0" y1="0" x2=".6" y2="1"><stop stopColor="#1c86dc" /><stop offset="1" stopColor="#1267c4" /></linearGradient>
    </defs>
    <path d="M.3 10A12 12 0 0 1 12 0C20 0 24 6 24 10.500C24 15 20 16 17.500 16C15 16 13.800 15 14.300 14C15.500 12.500 14.500 8.500 10 8C5 7 1.500 9 .3 10Z" fill="url(#eA)" />
    <path d="M.1 11.500C1 8 6 6.500 10 8C7.500 9.500 6.800 13 8.500 17C10.500 21 15 22.500 17 22.800C13 24.800 8 24.500 4.500 21.500C1 19 0 15 .1 11.500Z" fill="url(#eB)" />
    <path d="M10.500 8.200C7 10 7 15 9 18C12 23 18 23 22 18C19 20 14.500 19.500 12.500 17C10.500 14.500 11.500 12.500 12.500 11.500C12.500 10 11.800 8.700 10.500 8.200Z" fill="#124f91" />
  </svg>
);

const StoreIcon = () => (
  <svg width="24" height="24" viewBox="0 0 24 24">
    <path d="M7 7V3Q7 1.500 8.500 1.500H15.500Q17 1.500 17 3V7" fill="none" stroke="#2fb3e8" strokeWidth="1.800" />
    <path d="M.5 6H23.500V21Q23.500 24 20.500 24H3.500Q.5 24 .5 21Z" fill="#eef0f1" />
    <path d="M7.500 10H11.700V14.200H7.500Z" fill="#f25022" /><path d="M12.500 10H16.700V14.200H12.500Z" fill="#5fae12" /><path d="M7.500 15H11.700V19.200H7.500Z" fill="#00a4ef" /><path d="M12.500 15H16.700V19.200H12.500Z" fill="#ffb900" />
  </svg>
);

const OutlookIcon = () => (
  <svg width="24" height="24" viewBox="0 0 24 24">
    <path d="M4 8L14 1L24 8V14H4Z" fill="#1a6fc4" /><path d="M7 3L14 1L21 6L13 12H5Z" fill="#42a9ee" /><path d="M4 11L24 9V20Q24 23 21 23H8Q5 23 5 20Z" fill="#30b6f0" />
    <path d="M24 9L10 18L16 23H21Q24 23 24 20Z" fill="#65d4fb" /><path d="M12 13L20 5L24 8V10L14 17Z" fill="#0d57a6" />
    <rect y="5" width="14" height="14" rx="1.500" fill="#0f6cc9" /><ellipse cx="7" cy="12" rx="3" ry="3.500" fill="none" stroke="#fff" strokeWidth="1.800" />
  </svg>
);

const ChromeIcon = () => (
  <svg width="24" height="24" viewBox="0 0 24 24">
    <path d="M12 12L1.600 6A12 12 0 0 1 22.400 6Z" fill="#ea4335" />
    <path d="M12 12V6H22.400A12 12 0 0 1 12 24L17.200 15Z" fill="#fbc116" />
    <path d="M12 12L17.200 15L12 24A12 12 0 0 1 1.600 6L6.800 15Z" fill="#34a046" />
    <circle cx="12" cy="12" r="6" fill="#fff" /><circle cx="12" cy="12" r="4.800" fill="#2f7cf0" />
  </svg>
);

const ExcelIcon = () => (
  <svg width="24" height="24" viewBox="0 0 24 24">
    <path d="M6 1H15V12H6Z" fill="#21a366" /><path d="M15 1H23Q24 1 24 2V7H15Z" fill="#37c683" /><path d="M15 7H24V12H15Z" fill="#2bab6c" /><path d="M6 12H24V17H6Z" fill="#187a48" /><path d="M6 17H24V21Q24 22 23 22H6Z" fill="#12613a" /><path d="M6 7H15V12H6Z" fill="#1a8a50" />
    <rect y="5" width="12" height="13" rx="1" fill="#117a41" /><path d="M3.500 8L8.500 15M8.500 8L3.500 15" stroke="#fff" strokeWidth="1.800" />
  </svg>
);

const ChevronIcon = () => (
  <svg width="24" height="24" viewBox="0 0 24 24" fill="none" stroke="#fff" strokeWidth="1.700"><path d="M7 14.500L12 9.500L17 14.500" /></svg>
);

const CloudIcon = () => (
  <svg width="24" height="24" viewBox="0 0 24 24">
    <path d="M5 17Q1 15 3 11Q5 8 8 9Q11 4 15 7Q20 8 18 13Q17 17 13 17Z" fill="#b9babb" /><path d="M7 9Q11 4 15 7Q19 9 17 13Z" fill="#e4e4e4" /><path d="M8 9L17 13L14 17H7Q11 14 8 9Z" fill="#8c8e90" />
    <circle cx="15.500" cy="15.500" r="4.600" fill="#b96c07" /><path d="M15.500 12.700V16.500M15.500 17.500V18.700" stroke="#fff" strokeWidth="1.200" />
  </svg>
);

const SyncIcon = () => (
  <svg width="24" height="24" viewBox="0 0 24 24" fill="none" stroke="#fff" strokeWidth="1.300">
    <path d="M5 12Q5 6 11 4.700Q16 4 19 9M19 4.500V9H14.500M5 20V15.500H9.500M5 16Q7 19 10 20" /><circle cx="16.500" cy="16" r="4" fill="#1683e2" stroke="none" />
  </svg>
);

const WifiIcon = () => (
  <svg width="24" height="24" viewBox="0 0 24 24" fill="none" stroke="#fff" strokeWidth="1.300" strokeLinecap="round">
    <path d="M4.500 10.500Q12 3.500 19.500 10.500M6.800 12.800Q12 8 17.200 12.800M9 15Q12 12.300 15 15" /><circle cx="12" cy="16.500" r="1.500" fill="#fff" stroke="none" />
  </svg>
);

const MutedIcon = () => (
  <svg width="24" height="24" viewBox="0 0 24 24" fill="none" stroke="#fff" strokeWidth="1.100" strokeLinejoin="round">
    <path d="M4.500 9.500H8L12 6.500V17.500L8 14.500H4.500ZM14.500 9.800L19.300 14.600M19.300 9.800L14.500 14.600" />
  </svg>
);

const BatteryIcon = () => (
  <svg width="24" height="24" viewBox="0 0 24 24" fill="none" stroke="#fff" strokeWidth="1.200">
    <path d="M10 7.500H16.500Q18 7.500 18 9V15.500Q18 17 16.500 17H7Q5.500 17 5.500 15.500V14" /><path d="M18.500 10.500H20V14H18.500" fill="#fff" stroke="none" />
    <path d="M10.500 9H16.500V15.500H7V14L10 11Z" fill="#fff" stroke="none" /><path d="M7.500 5L3.800 10.500H6.500L5.500 14L10 8.800H7.300L8.500 5Z" fill="#fff" stroke="none" />
  </svg>
);

/* ---------- page ---------- */

function Message({ out, time, react, children }) {
  return (
    <Row $out={out}>
      <Bubble $out={out}>
        {children}
        <MetaSpace $out={out} />
        <Meta $out={out}>
          <time>{time}</time>
          {out && <Ticks />}
        </Meta>
      </Bubble>
      {react && <button type="button" aria-label="Reagir"><ReactIcon /></button>}
    </Row>
  );
}

const APPS = [
  { name: 'Visão de tarefas', Icon: TaskViewIcon },
  { name: 'Microsoft 365 Copilot', Icon: M365Icon },
  { name: 'Explorador de Arquivos', Icon: FolderIcon, open: true },
  { name: 'Microsoft Edge', Icon: EdgeIcon },
  { name: 'Microsoft Store', Icon: StoreIcon },
  { name: 'Outlook', Icon: OutlookIcon },
  { name: 'Google Chrome', Icon: ChromeIcon, active: true },
  { name: 'Excel', Icon: ExcelIcon, open: true },
];

export default function App() {
  return (
    <Screen>
      <GlobalStyle />
      <Header>
        <Avatar />
        <Title>YYD Teste</Title>
        <HeaderActions>
          <IconButton type="button" aria-label="Pesquisar"><SearchIcon /></IconButton>
          <IconButton type="button" aria-label="Mais opções"><MenuIcon /></IconButton>
        </HeaderActions>
      </Header>

      <Chat>
        <ChatWallpaper />
        <Conversation>
          <Messages>
            <Message out time="10:53">Olá! Gostaria de falar sobre os tours da YYD.</Message>
            <Message time="10:54">
              Olá! Fico muito feliz que você esteja interessado em nossos tours na "Yes,<br />
              You Deserve!" <Blush /> Temos algumas experiências incríveis em Sintra e Cascais.<br />
              Você já tem algum destino específico em mente ou gostaria de saber mais<br />
              sobre nossas opções? Estou aqui para ajudar!
            </Message>
            <Message out time="14:07">Hello</Message>
            <Message time="14:07" react>
              Hello! <Wave /> How are you today? Are you curious about our electric tuk-tuk<br />
              tours in Sintra and Cascais? I’d love to help you find the perfect experience!
            </Message>
            <Message out time="14:07">Boa tarde, tudo bem?</Message>
            <Message time="14:07">
              Boa tarde! Estou aqui para ajudar você. Como posso tornar sua experiência
              em Portugal ainda mais especial? Se tiver alguma dúvida ou precisar de
              informações, sinta-se à vontade para perguntar!
            </Message>
            <DayLabel>Hoje</DayLabel>
            <Message out time="18:58">Olá! Gostaria de falar sobre os tours da YYD.</Message>
          </Messages>
          <Scrollbar aria-hidden="true"><Arrow /><Thumb /><Arrow down /></Scrollbar>
        </Conversation>

        <Composer onSubmit={(e) => e.preventDefault()}>
          <ComposerTools>
            <IconButton type="button" aria-label="Anexar"><PlusIcon /></IconButton>
            <IconButton type="button" aria-label="Figurinhas"><StickerIcon /></IconButton>
          </ComposerTools>
          <MessageInput aria-label="Digite uma mensagem" placeholder="Digite uma mensagem" />
          <IconButton type="button" aria-label="Mensagem de voz"><MicIcon /></IconButton>
        </Composer>
      </Chat>

      <Taskbar>
        <SearchBox type="button">quisar<Capybara /></SearchBox>
        <Apps>
          {APPS.map(({ name, Icon, open, active }) => (
            <AppButton key={name} type="button" aria-label={name} $open={open} $active={active}><Icon /></AppButton>
          ))}
        </Apps>
        <Tray>
          <IconButton type="button" aria-label="Mostrar ícones ocultos"><ChevronIcon /></IconButton>
          <IconButton type="button" aria-label="OneDrive"><CloudIcon /></IconButton>
          <IconButton type="button" aria-label="Windows Update"><SyncIcon /></IconButton>
          <TrayLabel type="button" $width="36px" $align="center">{'POR\nIT'}</TrayLabel>
          <TrayGroup>
            <IconButton type="button" aria-label="Wi-Fi"><WifiIcon /></IconButton>
            <IconButton type="button" aria-label="Som desativado"><MutedIcon /></IconButton>
            <IconButton type="button" aria-label="Bateria"><BatteryIcon /></IconButton>
          </TrayGroup>
          <TrayLabel type="button" $width="66px" $align="right">{'18:58\n22/10/2025'}</TrayLabel>
        </Tray>
      </Taskbar>
    </Screen>
  );
}
